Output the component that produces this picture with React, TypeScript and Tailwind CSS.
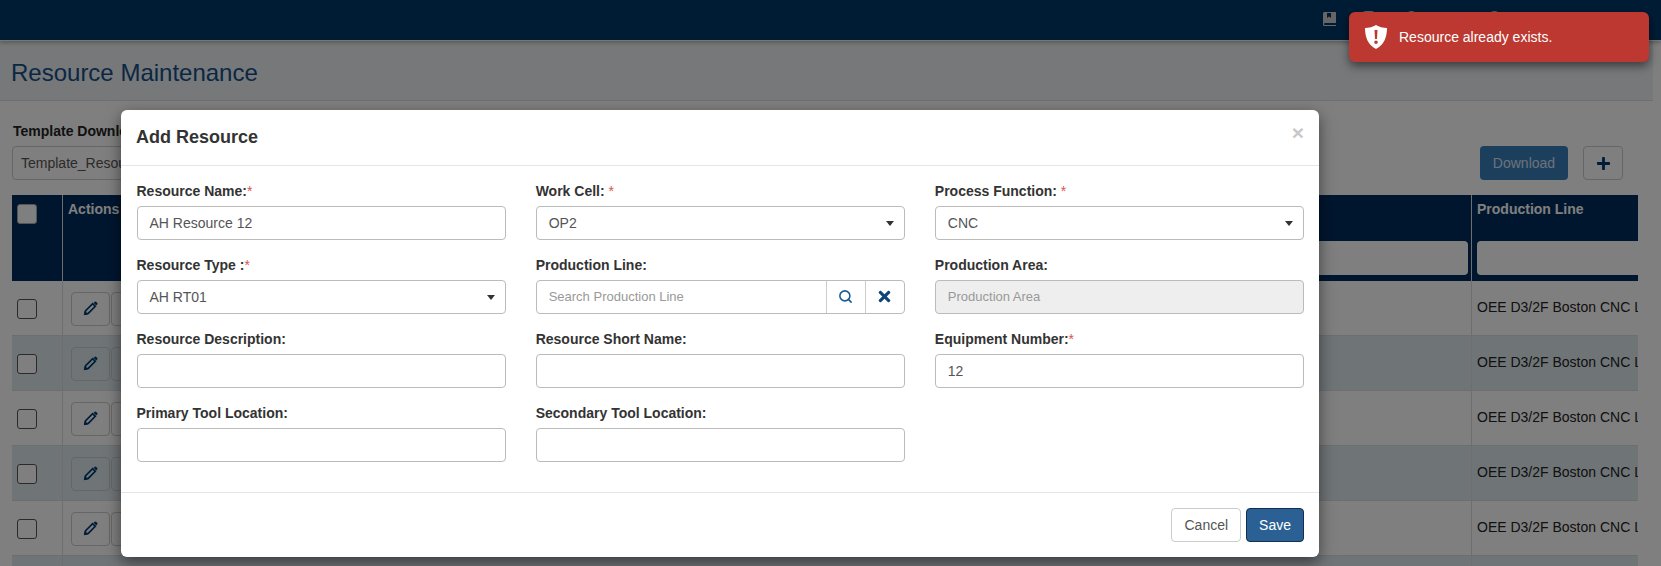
import React from "react";
import { Search } from "lucide-react";
import { FaPlus, FaTimes } from "react-icons/fa";

const font = "font-['Liberation_Sans',Arial,sans-serif]";
const inputBox =
  "h-[34px] w-full rounded border border-[#bbb] bg-white px-3 flex items-center text-sm text-[#555]";

const Caret = () => (
  <span className="ml-auto -mr-[2px] w-0 h-0 border-x-4 border-x-transparent border-t-[5px] border-t-[#333]" />
);

const PencilIcon = () => (
  <svg width="15" height="15" viewBox="0 0 16 16" className="text-[#003a70]">
    <path fill="none" stroke="currentColor" strokeWidth="1.8" d="M2 14l.8-3.600L10.300 2.900l2.800 2.800-7.500 7.500z" />
    <path fill="currentColor" d="M11.300 1.900l.9-.9a1.400 1.400 0 0 1 2 0l.8.8a1.400 1.400 0 0 1 0 2l-.9.9zM1 15l.9-4.500 3.600 3.600z" />
  </svg>
);

const Label = ({ text, star }: { text: string; star?: string }) => (
  <label className="block h-5 mb-[5px] text-sm leading-5 font-bold text-[#333]">
    {text}
    {star && <span className="text-[#d9534f] font-normal">{star}</span>}
  </label>
);

const Field = ({ label, star, value }: { label: string; star?: string; value?: string }) => (
  <div>
    <Label text={label} star={star} />
    <div className={inputBox}>{value}</div>
  </div>
);

const SelectField = ({ label, star, value }: { label: string; star?: string; value: string }) => (
  <div>
    <Label text={label} star={star} />
    <div className={inputBox}>
      {value}
      <Caret />
    </div>
  </div>
);

const rows = [0, 1, 2, 3, 4, 5];

const TableRow = ({ alt }: { alt: boolean }) => (
  <div className={`flex h-[55px] shrink-0 border-b border-[#ddd] ${alt ? "bg-[#dfe9ef]" : "bg-white"}`}>
    <div className="w-[51px] shrink-0 pl-[5px] pt-[18px] border-r border-[#ddd]">
      <div className="w-5 h-5 rounded-[3px] border border-[#555] bg-white" />
    </div>
    <div className="flex-1 flex gap-px pl-[8px] pt-[11px] border-r border-[#ddd]">
      <div className="w-[39px] h-[34px] rounded border border-[#ccc] flex items-center justify-center pb-px">
        <PencilIcon />
      </div>
      <div className="w-[39px] h-[34px] rounded border border-[#ccc]" />
    </div>
    <div className="w-[166px] shrink-0 pl-[5px] pb-[3px] flex items-center text-sm text-[#222] whitespace-nowrap overflow-hidden">
      OEE D3/2F Boston CNC Line
    </div>
  </div>
);

const App: React.FC = () => {
  return (
    <div className={`relative h-[566px] w-[1661px] overflow-hidden bg-white ${font}`}>
      {/* page behind the dialog */}
      <nav className="relative h-[41px] bg-[#00386a] border-b border-[#eee] shadow-[0_2px_4px_rgba(0,0,0,0.25)] flex items-start justify-end pr-[160px] pt-3">
        <svg width="13" height="14" viewBox="0 0 13 14" className="text-[#ccc]">
          <path fill="currentColor" d="M0 1.5C0 .7.7 0 1.5 0H13v11H2a1 1 0 0 0 0 2h11v1H1.5C.7 14 0 13.3 0 12.5z" />
          <path fill="#00386a" d="M4 1h4v5L6 4.600 4 6z" />
        </svg>
        <span className="-mt-px ml-[26px] w-[13px] h-[14px] rounded-sm bg-[#ccc]" />
        <span className="-mt-px ml-[30px] w-[13px] h-[14px] rounded-full bg-[#ccc]" />
        <span className="-mt-px ml-[70px] w-[13px] h-[14px] rounded-full bg-[#ccc]" />
      </nav>
      <div className="h-[60px] mr-2 bg-[#eef1f4] border-b border-[#ddd] pl-[11px] pt-4">
        <h1 className="text-2xl leading-8 text-[#164f86]">Resource Maintenance</h1>
      </div>
      <div className="pl-3 pr-[23px] pt-5">
        <div className="h-5 pl-px text-sm font-bold text-[#222]">Template Download</div>
        <div className="flex items-start mt-[5px] mb-[15px]">
          <div className="h-[34px] w-[400px] rounded border border-[#ccc] px-2 flex items-center text-sm text-[#555]">
            Template_Resource.xlsx
          </div>
          <div className="ml-auto h-[34px] w-[88px] rounded bg-[#3a7fbd] text-[#d8e4f0] text-sm flex items-center justify-center">
            Download
          </div>
          <div className="ml-[15px] mr-[15px] h-[34px] w-10 rounded border border-[#ccc] flex items-center justify-center">
            <FaPlus size={15} className="text-[#003a70]" />
          </div>
        </div>
        <div className="flex flex-col h-[400px] overflow-hidden">
          <div className="flex h-[86px] shrink-0 bg-[#002c5e] text-sm font-bold text-white">
            <div className="w-[51px] shrink-0 pl-[5px] pt-[9px] border-r border-[#ddd]">
              <div className="w-5 h-5 rounded-[3px] border border-[#aaa] bg-white" />
            </div>
            <div className="flex-1 pl-[5px] pt-[4px] border-r border-[#ddd] flex flex-col">
              <span className="leading-5">Actions</span>
              <div className="mt-[22px] ml-auto mr-[3px] w-[300px] h-[34px] rounded bg-white" />
            </div>
            <div className="w-[166px] shrink-0 pl-[5px] pt-[4px] flex flex-col whitespace-nowrap overflow-hidden">
              <span className="leading-5">Production Line</span>
              <div className="mt-[22px] w-[200px] h-[34px] shrink-0 rounded bg-white" />
            </div>
          </div>
          {rows.map((r) => (
            <TableRow key={r} alt={r % 2 === 1} />
          ))}
        </div>
      </div>

      {/* backdrop */}
      <div className="absolute inset-0 bg-black/50" />

      {/* dialog */}
      <div className="absolute left-[121px] top-[110px] w-[1198px] rounded-md bg-white shadow-[0_5px_15px_rgba(0,0,0,0.5)]">
        <div className="relative h-[56px] border-b border-[#e5e5e5] px-[15px] flex items-center">
          <h4 className="-mt-[2px] text-lg font-bold text-[#333]">Add Resource</h4>
          <span className="absolute right-[15px] top-[12px] text-[21px] leading-[21px] font-bold text-[#c8c8c8]">×</span>
        </div>
        <div className="grid grid-cols-3 gap-x-[30px] gap-y-[15px] pl-[15.5px] pr-[15px] pt-[15px] pb-[30px]">
          <Field label="Resource Name:" star="*" value="AH Resource 12" />
          <SelectField label="Work Cell: " star="*" value="OP2" />
          <SelectField label="Process Function: " star="*" value="CNC" />
          <SelectField label="Resource Type :" star="*" value="AH RT01" />
          <div>
            <Label text="Production Line:" />
            <div className="flex h-[34px] rounded border border-[#bbb] text-sm">
              <div className="flex-1 flex items-center px-3 text-[#999] text-[13px]">Search Production Line</div>
              <div className="w-[39px] border-l border-[#ccc] flex items-center justify-center pb-px pr-px">
                <Search size={15} strokeWidth={2.5} className="text-[#1c5a96]" />
              </div>
              <div className="w-[39px] border-l border-[#ccc] flex items-center justify-center pb-px">
                <FaTimes size={17} className="text-[#0f4478]" />
              </div>
            </div>
          </div>
          <div>
            <Label text="Production Area:" />
            <div className="h-[34px] rounded border border-[#bbb] bg-[#eee] px-3 flex items-center text-[13px] text-[#999]">
              Production Area
            </div>
          </div>
          <Field label="Resource Description:" />
          <Field label="Resource Short Name:" />
          <Field label="Equipment Number:" star="*" value="12" />
          <Field label="Primary Tool Location:" />
          <Field label="Secondary Tool Location:" />
        </div>
        <div className="h-[65px] border-t border-[#e5e5e5] px-[15px] flex items-center justify-end gap-[5px]">
          <button className="h-[34px] px-3 rounded border border-[#ccc] bg-white text-sm text-[#555]">Cancel</button>
          <button className="h-[34px] px-3 rounded border border-[#122f4d] bg-[#2a6093] text-sm text-white">Save</button>
        </div>
      </div>

      {/* toast */}
      <div className="absolute left-[1349px] top-3 w-[300px] h-[50px] rounded-md bg-[#bc3831] text-white text-sm flex items-center pl-4 gap-3 shadow-[0_4px_10px_rgba(0,0,0,0.5)]">
        <svg width="22" height="24" viewBox="0 0 22 24">
          <path fill="currentColor" fillRule="evenodd" d="M11 0c3 2 7 3 11 3 0 9-3 17-11 21C3 20 0 12 0 3c4 0 8-1 11-3zM9.500 5l.5 9h2l.5-9zM11 15.500a1.800 1.800 0 1 0 0 3.600 1.800 1.800 0 0 0 0-3.600z" />
        </svg>
        <span>Resource already exists.</span>
      </div>
    </div>
  );
};

export default App;
